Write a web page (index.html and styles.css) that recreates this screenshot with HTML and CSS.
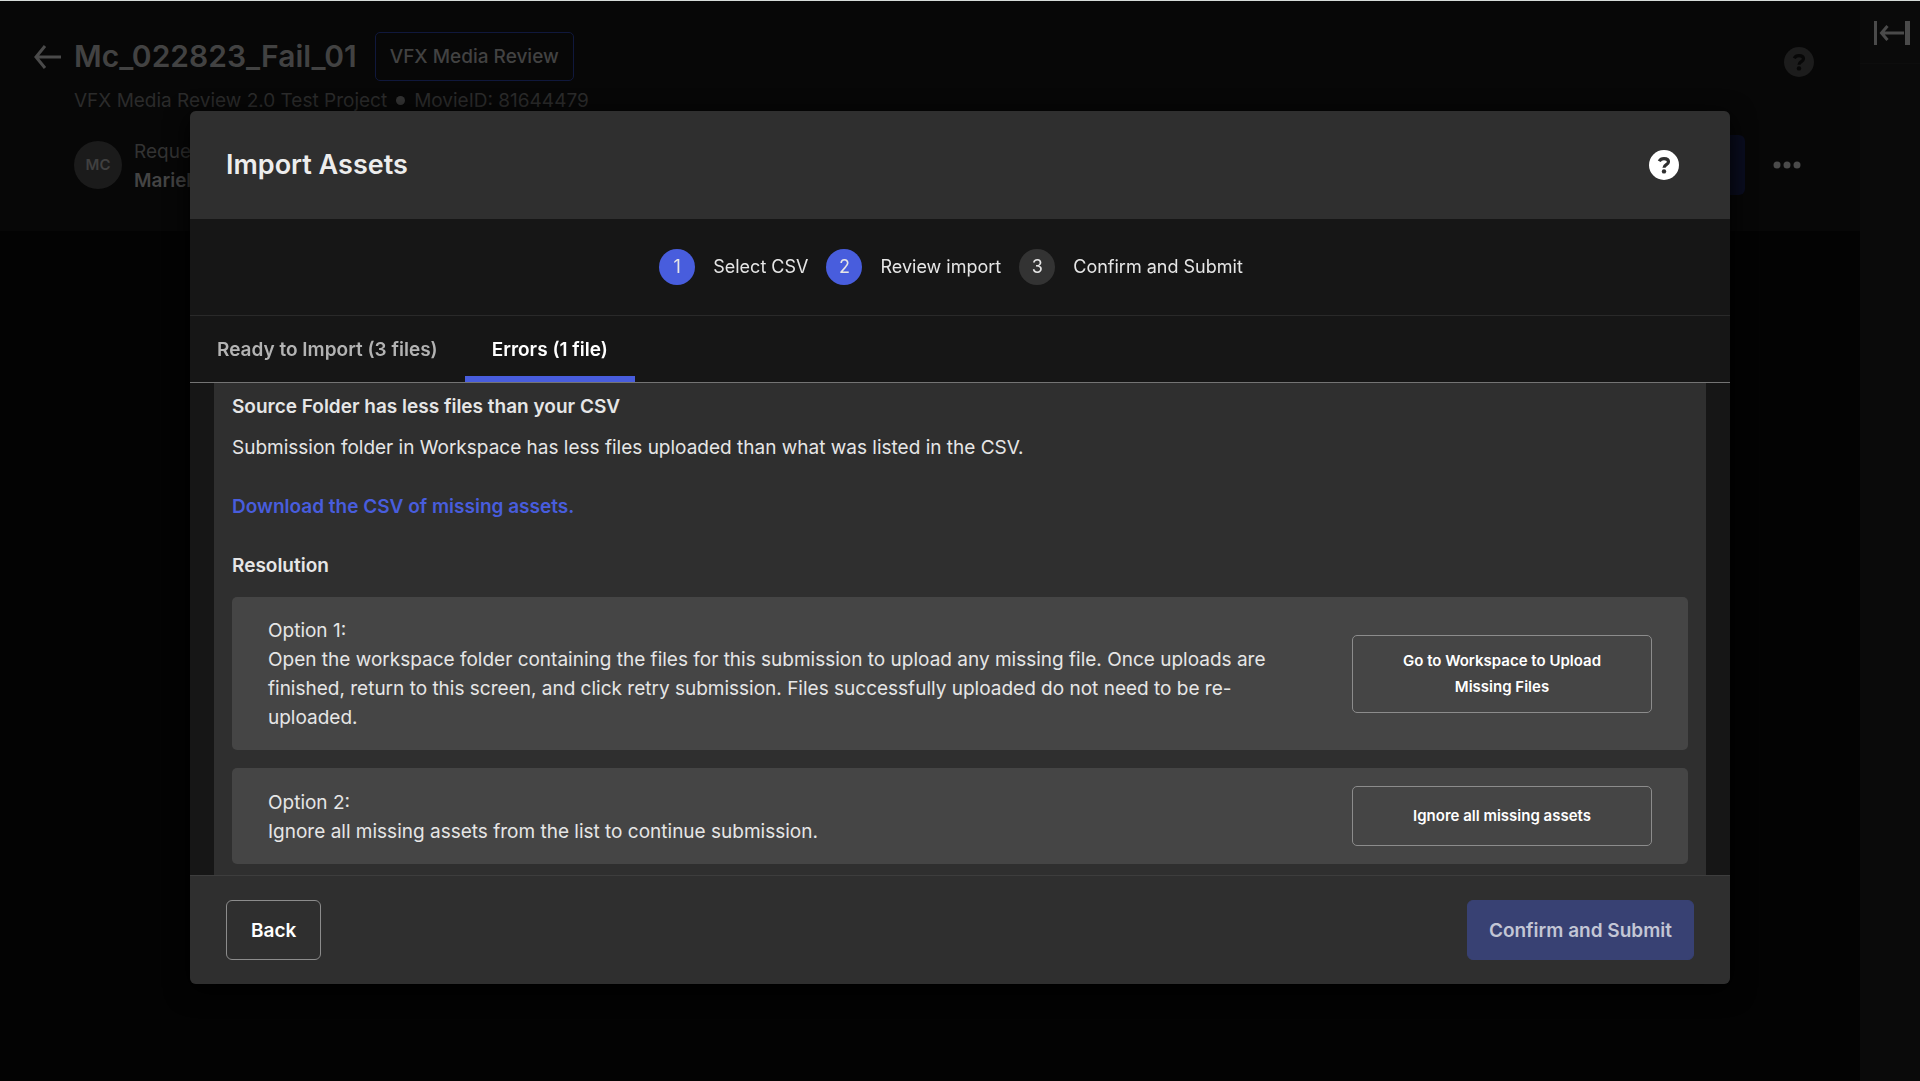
FILE: index.html
```html
<!DOCTYPE html>
<html lang="en">
<head>
  <meta charset="UTF-8">
  <meta name="viewport" content="width=device-width, initial-scale=1.0">
  <title>Import Assets - VFX Media Review</title>
  <link rel="stylesheet" href="styles.css">
</head>
<body>
  <div class="app">
    <main class="page">
      <header class="page-header">
        <div class="title-row">
          <button class="icon-btn" type="button" aria-label="Go back">
            <svg width="28" height="26" viewBox="0 0 28 26" fill="none" stroke="currentColor" stroke-width="3"><path d="M28 14H3M12 3 3 14l9 11"/></svg>
          </button>
          <h1>Mc_022823_Fail_01</h1>
          <span class="tag">VFX Media Review</span>
          <button class="icon-btn page-help" type="button" aria-label="Help">
            <svg width="30" height="30" viewBox="0 0 30 30"><circle cx="15" cy="15" r="15" fill="currentColor"/><path d="M10.2 11.2C11.2 9.4 13 8.6 15 8.6c2.800 0 4.500 1.300 4.500 3.200 0 2.900-4.500 2.700-4.500 5.900" fill="none" stroke="#070707" stroke-width="3.200"/><circle cx="15" cy="21.400" r="2.200" fill="#070707"/></svg>
          </button>
        </div>
        <p class="subtitle">VFX Media Review 2.0 Test Project <span class="dot"></span> MovieID: 81644479</p>
        <div class="meta-row">
          <span class="avatar">MC</span>
          <div class="requester">
            <span>Requester</span>
            <strong>Mariel</strong>
          </div>
          <button class="action-btn" type="button" aria-label="Import"></button>
          <button class="icon-btn" type="button" aria-label="More">
            <svg width="28" height="8" viewBox="0 0 28 8" fill="currentColor"><circle cx="4" cy="4" r="3.500"/><circle cx="14" cy="4" r="3.500"/><circle cx="24" cy="4" r="3.500"/></svg>
          </button>
        </div>
      </header>
    </main>
    <aside class="side">
      <button class="icon-btn side-toggle" type="button" aria-label="Expand panel">
        <svg width="36" height="24" viewBox="0 0 36 24" fill="none" stroke="currentColor" stroke-width="3"><path d="M1.500 0v24M8 12h22M13.500 5 7.500 12l6 7"/><path d="M33.500 0v24" stroke-width="5"/></svg>
      </button>
    </aside>
  </div>

  <div class="overlay">
    <section class="modal" role="dialog" aria-labelledby="modal-title">
      <header class="modal-header">
        <h2 id="modal-title">Import Assets</h2>
        <button class="icon-btn modal-help" type="button" aria-label="Help">
          <svg width="30" height="30" viewBox="0 0 30 30"><circle cx="15" cy="15" r="15" fill="currentColor"/><path d="M10.2 11.2C11.2 9.4 13 8.6 15 8.6c2.800 0 4.500 1.300 4.500 3.200 0 2.900-4.500 2.700-4.500 5.900" fill="none" stroke="#2f2f2f" stroke-width="3.200"/><circle cx="15" cy="21.400" r="2.200" fill="#2f2f2f"/></svg>
        </button>
      </header>

      <ol class="steps">
        <li class="step done"><span class="num">1</span>Select CSV</li>
        <li class="step done"><span class="num">2</span>Review import</li>
        <li class="step"><span class="num">3</span>Confirm and Submit</li>
      </ol>

      <div class="tabs" role="tablist">
        <button class="tab" type="button" role="tab" aria-selected="false">Ready to Import (3 files)</button>
        <button class="tab active" type="button" role="tab" aria-selected="true">Errors (1 file)</button>
      </div>

      <div class="modal-body">
        <div class="panel">
          <h3>Source Folder has less files than your CSV</h3>
          <p class="description">Submission folder in Workspace has less files uploaded than what was listed in the CSV.</p>
          <a class="download" href="#">Download the CSV of missing assets.</a>
          <h3 class="resolution">Resolution</h3>
          <div class="option">
            <p>Option 1:<br>Open the workspace folder containing the files for this submission to upload any missing file. Once uploads are finished, return to this screen, and click retry submission. Files successfully uploaded do not need to be re-uploaded.</p>
            <button class="option-btn" type="button">Go to Workspace to Upload Missing Files</button>
          </div>
          <div class="option">
            <p>Option 2:<br>Ignore all missing assets from the list to continue submission.</p>
            <button class="option-btn" type="button">Ignore all missing assets</button>
          </div>
        </div>
      </div>

      <footer class="modal-footer">
        <button class="btn" type="button">Back</button>
        <button class="btn primary" type="button" disabled>Confirm and Submit</button>
      </footer>
    </section>
  </div>
</body>
</html>
```

FILE: styles.css
```css
* {
  box-sizing: border-box;
}

body {
  margin: 0;
  font-family: "Inter", sans-serif;
  font-size: 19px;
  line-height: 29px;
  color: #e6e6e6;
  background: #030303;
}

h1, h2, h3, p, ol {
  margin: 0;
  padding: 0;
}

button {
  font-family: inherit;
  font-size: inherit;
  line-height: inherit;
  cursor: pointer;
}

.icon-btn {
  display: flex;
  padding: 0;
  border: none;
  background: none;
  color: #4a4a4a;
}

/* Page behind the dialog */
.app {
  display: flex;
  min-height: 100vh;
  border-top: 1px solid #d5dbd8;
}

.page {
  flex: 1;
}

.page-header {
  height: 230px;
  padding: 31px 46px 0 33px;
  background: #070707;
}

.title-row {
  display: flex;
  align-items: center;
  height: 48px;
}

h1 {
  margin: 0 18px 0 13px;
  font-size: 30px;
  font-weight: 600;
  color: #424242;
}

.tag {
  padding: 9px 14px;
  border: 1px solid #10183c;
  border-radius: 5px;
  font-weight: 500;
  color: #424242;
}

.page-help {
  margin: 12px 0 0 auto;
  color: #1c1c1c;
}

.subtitle {
  display: flex;
  align-items: center;
  gap: 9px;
  margin: 6px 0 0 41px;
  color: #2b2b2b;
}

.dot {
  width: 9px;
  height: 9px;
  border-radius: 50%;
  background: #333;
}

.meta-row {
  display: flex;
  align-items: center;
  height: 60px;
  margin: 20px 13px 0 41px;
}

.avatar {
  width: 48px;
  height: 48px;
  border-radius: 50%;
  font-size: 15px;
  font-weight: 600;
  line-height: 48px;
  text-align: center;
  color: #404040;
  background: #1b1b1b;
}

.requester {
  display: flex;
  flex-direction: column;
  margin-left: 12px;
  padding-top: 2px;
  color: #333;
}

.requester strong {
  font-weight: 600;
  color: #444;
}

.action-btn {
  width: 180px;
  height: 60px;
  margin: 0 28px 0 auto;
  border: none;
  border-radius: 6px;
  background: #0a0d20;
}

.side {
  width: 60px;
  background: #0a0a0a;
}

.side-toggle {
  width: 60px;
  height: 63px;
  padding: 20px 10px 0 14px;
  border-bottom: 1px solid #0d0d0d;
}

/* Import dialog */
.overlay {
  position: fixed;
  inset: 0;
  display: flex;
  padding: 111px 190px 97px;
}

.modal {
  display: flex;
  flex: 1;
  flex-direction: column;
  overflow: hidden;
  border-radius: 6px;
  background: #161616;
  box-shadow: 0 6px 24px #000;
}

.modal-header {
  display: flex;
  align-items: center;
  justify-content: space-between;
  padding: 36px 51px 36px 36px;
  background: #2f2f2f;
}

h2 {
  font-size: 27px;
  font-weight: 600;
  line-height: 36px;
  color: #ededed;
}

.modal-help {
  color: #fff;
}

.steps {
  display: flex;
  justify-content: center;
  padding: 30px 0;
  border-bottom: 1px solid #292929;
  list-style: none;
}

.step {
  display: flex;
  align-items: center;
  gap: 18px;
  margin-right: 18px;
  font-size: 18px;
  line-height: 36px;
}

.num {
  width: 36px;
  height: 36px;
  border-radius: 50%;
  text-align: center;
  background: #333;
}

.done .num {
  background: #485ddd;
}

.tabs {
  display: flex;
  border-bottom: 1px solid #747474;
}

.tab {
  padding: 19px 27px 12px;
  border: none;
  border-bottom: 6px solid transparent;
  background: none;
  font-weight: 600;
  color: #b3b3b3;
}

.tab.active {
  border-color: #485ddd;
  color: #fff;
}

.modal-body {
  flex: 1;
  min-height: 0;
  padding: 0 24px;
  overflow: hidden;
}

.panel {
  min-height: 100%;
  padding: 9px 18px 18px;
  background: #2f2f2f;
}

h3 {
  font-size: 19px;
  font-weight: 600;
}

.description {
  margin: 12px 0 30px;
}

.download {
  font-weight: 600;
  text-decoration: none;
  color: #485ddd;
}

.resolution {
  margin: 30px 0 17px;
}

.option {
  display: flex;
  align-items: center;
  justify-content: space-between;
  gap: 36px;
  margin-bottom: 18px;
  padding: 18px 36px;
  border-radius: 5px;
  background: #454545;
}

.option p {
  padding-top: 1px;
}

.option-btn {
  flex: none;
  width: 300px;
  min-height: 60px;
  padding: 12px 36px;
  border: 1px solid #8c8c8c;
  border-radius: 5px;
  background: none;
  font-size: 15px;
  font-weight: 600;
  line-height: 26px;
  color: #fff;
}

.modal-footer {
  display: flex;
  justify-content: space-between;
  padding: 24px 36px;
  border-top: 1px solid #3d3d3d;
  background: #2f2f2f;
}

.btn {
  height: 60px;
  padding: 0 24px;
  border: 1px solid #8c8c8c;
  border-radius: 6px;
  background: none;
  font-weight: 600;
  color: #fff;
}

.btn.primary {
  padding: 0 21px;
  border-color: #384173;
  background: #384173;
  color: #c3c6d5;
}
```
